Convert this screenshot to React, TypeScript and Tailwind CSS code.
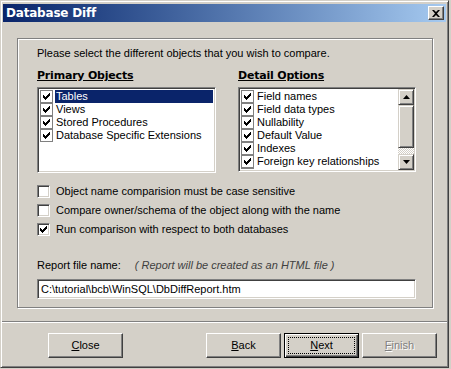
const primary = ['Tables', 'Views', 'Stored Procedures', 'Database Specific Extensions'];
const details = ['Field names', 'Field data types', 'Nullability', 'Default Value', 'Indexes', 'Foreign key relationships', 'Triggers'];

function Check({ checked, flat }: { checked: boolean; flat?: boolean }) {
  return (
    <span
      className={`relative inline-block w-[13px] h-[13px] shrink-0 bg-white ${
        flat
          ? 'border border-[#808080]'
          : 'border-t border-l border-t-[#808080] border-l-[#808080] border-r border-b border-r-white border-b-white shadow-[inset_1px_1px_0_#404040,inset_-1px_-1px_0_#d4d0c8]'
      }`}
    >
      {checked && (
        <svg className="absolute left-0 top-0" width="11" height="11" viewBox="0 0 11 11">
          <path d="M2 4h1v3h-1zM3 5h1v3h-1zM4 6h1v3h-1zM5 5h1v3h-1zM6 4h1v3h-1zM7 3h1v3h-1zM8 2h1v3h-1z" fill="#000" />
        </svg>
      )}
    </span>
  );
}

function Btn({ label, u, primary, disabled }: { label: string; u: number; primary?: boolean; disabled?: boolean }) {
  const pre = label.slice(0, u);
  const ch = label[u];
  const post = label.slice(u + 1);
  return (
    <button
      className={`relative w-[75px] h-[25px] bg-[#d4d0c8] text-[11px] flex items-center justify-center ${
        primary
          ? 'border border-black shadow-[inset_1px_1px_0_#fff,inset_-1px_-1px_0_#404040,inset_-2px_-2px_0_#808080]'
          : 'border-t border-l border-t-white border-l-white border-r border-b border-r-[#404040] border-b-[#404040] shadow-[inset_-1px_-1px_0_#808080]'
      } ${disabled ? 'text-[#808080] [text-shadow:1px_1px_0_#fff]' : 'text-black'}`}
    >
      {primary && <span className="absolute inset-[3px] border border-dotted border-black" />}
      <span>
        {pre}
        <span className="underline underline-offset-1">{ch}</span>
        {post}
      </span>
    </button>
  );
}

export default function App() {
  return (
    <div className="w-[451px] h-[369px] bg-[#d4d0c8] font-['Liberation_Sans',Arial,sans-serif] text-[11px] text-black leading-[13px] overflow-hidden">
      <div className="w-[449px] h-[368px] flex flex-col border-t border-l border-t-[#d4d0c8] border-l-[#d4d0c8] border-r border-b border-r-[#404040] border-b-[#404040] shadow-[inset_1px_1px_0_#fff,inset_-1px_-1px_0_#808080] p-[2px]">
        {/* Title bar */}
        <div className="h-[18px] mt-px flex items-center justify-between bg-gradient-to-r from-[#0a246a] to-[#a6caf0] pl-[3px] pr-[2px]">
          <span className="text-white font-bold text-[12px] font-['DejaVu_Sans',sans-serif] tracking-[-0.2px]">Database Diff</span>
          <span className="w-[16px] h-[14px] bg-[#d4d0c8] flex items-center justify-center border-t border-l border-t-white border-l-white border-r border-b border-r-[#404040] border-b-[#404040] shadow-[inset_-1px_-1px_0_#808080]">
            <svg width="8" height="7" viewBox="0 0 8 7">
              <path d="M0 0h2l2 2 2-2h2l-3 3.5 3 3.5h-2l-2-2-2 2h-2l3-3.5z" fill="#000" />
            </svg>
          </span>
        </div>

        {/* Group */}
        <div className="ml-[14px] mt-[16px] w-[416px] h-[270px] border border-[#808080] shadow-[inset_1px_1px_0_#fff,1px_1px_0_#fff] pl-[19px] pt-[8px]">
          <div>Please select the different objects that you wish to compare.</div>
          <div className="flex gap-[22px] mt-[9px]">
            <div className="w-[179px]">
              <div className="font-bold underline underline-offset-1 font-['DejaVu_Sans',sans-serif] text-[11px] tracking-[-0.2px]">Primary Objects</div>
              <div className="mt-[5px] h-[86px] bg-white border-t border-l border-t-[#808080] border-l-[#808080] border-r border-b border-r-white border-b-white shadow-[inset_1px_1px_0_#404040,inset_-1px_-1px_0_#d4d0c8] p-[2px]">
                {primary.map((p, i) => (
                  <div key={p} className="h-[13px] flex items-center gap-[2px]">
                    <Check checked flat />
                    <span className={`flex-1 h-[13px] pl-[1px] ${i === 0 ? 'bg-[#0a246a] text-white' : ''}`}>{p}</span>
                  </div>
                ))}
              </div>
            </div>
            <div className="w-[178px]">
              <div className="font-bold underline underline-offset-1 font-['DejaVu_Sans',sans-serif] text-[11px] tracking-[-0.2px]">Detail Options</div>
              <div className="mt-[5px] h-[85px] bg-white border-t border-l border-t-[#808080] border-l-[#808080] border-r border-b border-r-white border-b-white shadow-[inset_1px_1px_0_#404040,inset_-1px_-1px_0_#d4d0c8] p-[2px] flex overflow-hidden">
                <div className="flex-1 overflow-hidden">
                  {details.map((d) => (
                    <div key={d} className="h-[13px] flex items-center gap-[2px] shrink-0">
                      <Check checked flat />
                      <span className="pl-[1px] whitespace-nowrap">{d}</span>
                    </div>
                  ))}
                </div>
                <div className="w-[16px] -mr-[1px] -mt-[1px] -mb-[1px] flex flex-col">
                  <div className="h-[16px] bg-[#d4d0c8] flex items-center justify-center border-t border-l border-t-[#d4d0c8] border-l-[#d4d0c8] border-r border-b border-r-[#404040] border-b-[#404040] shadow-[inset_1px_1px_0_#fff,inset_-1px_-1px_0_#808080]">
                    <svg width="7" height="4" viewBox="0 0 7 4"><path d="M3.5 0L7 4H0z" fill="#000" /></svg>
                  </div>
                  <div className="h-[43px] bg-[#d4d0c8] border-t border-l border-t-[#d4d0c8] border-l-[#d4d0c8] border-r border-b border-r-[#404040] border-b-[#404040] shadow-[inset_1px_1px_0_#fff,inset_-1px_-1px_0_#808080]" />
                  <div className="flex-1 bg-[repeating-conic-gradient(#fff_0_25%,#d4d0c8_0_50%)] bg-[length:2px_2px]" />
                  <div className="h-[16px] bg-[#d4d0c8] flex items-center justify-center border-t border-l border-t-[#d4d0c8] border-l-[#d4d0c8] border-r border-b border-r-[#404040] border-b-[#404040] shadow-[inset_1px_1px_0_#fff,inset_-1px_-1px_0_#808080]">
                    <svg width="7" height="4" viewBox="0 0 7 4"><path d="M0 0H7L3.5 4z" fill="#000" /></svg>
                  </div>
                </div>
              </div>
            </div>
          </div>

          <div className="mt-[12px] flex flex-col gap-[6px]">
            <label className="flex items-center gap-[6px] h-[13px]"><Check checked={false} />Object name comparision must be case sensitive</label>
            <label className="flex items-center gap-[6px] h-[13px]"><Check checked={false} />Compare owner/schema of the object along with the name</label>
            <label className="flex items-center gap-[6px] h-[13px]"><Check checked />Run comparison with respect to both databases</label>
          </div>

          <div className="mt-[23px] flex">
            <span>Report file name:</span>
            <span className="ml-[14px] italic text-[#404040]">( Report will be created as an HTML file )</span>
          </div>
          <div className="mt-[7px] w-[379px] h-[20px] bg-white border-t border-l border-t-[#808080] border-l-[#808080] border-r border-b border-r-white border-b-white shadow-[inset_1px_1px_0_#404040,inset_-1px_-1px_0_#d4d0c8] flex items-center pl-[3px]">
            C:\tutorial\bcb\WinSQL\DbDiffReport.htm
          </div>
        </div>

        {/* Separator */}
        <div className="mt-[13px] h-[2px] border-t border-t-[#808080] border-b border-b-white -mx-[1px]" />

        {/* Buttons */}
        <div className="mt-[10px] flex pl-[45px]">
          <Btn label="Close" u={0} />
          <div className="ml-[83px] flex gap-[3px]">
            <Btn label="Back" u={0} />
            <Btn label="Next" u={0} primary />
            <Btn label="Finish" u={0} disabled />
          </div>
        </div>
      </div>
    </div>
  );
}
